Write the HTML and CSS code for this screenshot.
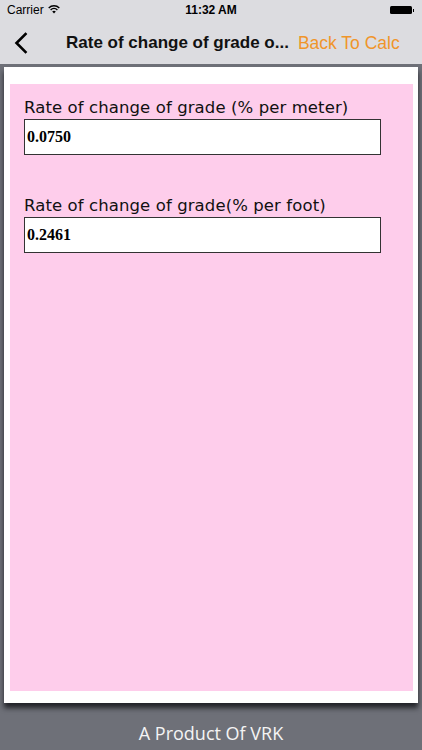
FILE: index.html
```html
<!DOCTYPE html>
<html>
<head>
<meta charset="utf-8">
<link rel="stylesheet" href="styles.css">
</head>
<body>
<div class="app">
  <header class="top">
    <div class="status">
      <div class="status-left">
        <span class="carrier">Carrier</span>
        <svg class="wifi" width="12" height="9" viewBox="0 0 12 9">
          <path d="M6 8.6 L4.2 6.6 A2.6 2.6 0 0 1 7.8 6.6 Z" fill="#000"/>
          <path d="M2.6 4.9 A4.9 4.9 0 0 1 9.4 4.9" stroke="#000" stroke-width="1.4" fill="none"/>
          <path d="M0.7 2.9 A7.6 7.6 0 0 1 11.3 2.9" stroke="#000" stroke-width="1.4" fill="none"/>
        </svg>
      </div>
      <span class="time">11:32 AM</span>
      <div class="battery"><span class="batt-body"></span><span class="batt-tip"></span></div>
    </div>
    <nav class="navbar">
      <svg class="back" width="14" height="22" viewBox="0 0 14 22">
        <path d="M11.5 2 L2.5 11 L11.5 20" stroke="#000" stroke-width="2.6" fill="none" stroke-linecap="square"/>
      </svg>
      <span class="title">Rate of change of grade o...</span>
      <span class="action">Back To Calc</span>
    </nav>
  </header>
  <main class="stage">
    <section class="card">
      <div class="pink">
        <div class="field">
          <label class="lbl">Rate of change of grade (% per meter)</label>
          <div class="box">0.0750</div>
        </div>
        <div class="field">
          <label class="lbl">Rate of change of grade(% per foot)</label>
          <div class="box">0.2461</div>
        </div>
      </div>
    </section>
  </main>
  <footer class="foot">A Product Of VRK</footer>
</div>
</body>
</html>
```
FILE: styles.css
```css
* { box-sizing: border-box; }
html, body { margin: 0; padding: 0; }
body {
  width: 422px;
  height: 750px;
  overflow: hidden;
  background: #6e7078;
  font-family: "Liberation Sans", Arial, sans-serif;
}
.app {
  display: flex;
  flex-direction: column;
  height: 750px;
}
.top {
  background: #dcdce0;
  height: 64px;
  flex: none;
}
.status {
  height: 20px;
  display: flex;
  align-items: center;
  justify-content: space-between;
  padding: 0 7px;
  font-size: 12px;
  color: #000;
  position: relative;
}
.status-left { display: flex; align-items: center; gap: 4px; }
.wifi { margin-top: -1px; }
.time {
  position: absolute;
  left: 0; right: 0;
  text-align: center;
  font-weight: bold;
  pointer-events: none;
}
.battery { display: flex; align-items: center; margin-right: 1px; }
.batt-body {
  width: 22px; height: 8px;
  background: #000;
  border-radius: 1.5px;
}
.batt-tip {
  width: 1.5px; height: 3px;
  background: #000;
  margin-left: 1px;
}
.navbar {
  height: 44px;
  display: flex;
  align-items: center;
  padding: 2px 0 0 14px;
}
.back { flex: none; margin-right: 38px; }
.title {
  font-size: 17px;
  font-weight: bold;
  color: #111;
  letter-spacing: 0;
  white-space: nowrap;
}
.action {
  margin-left: 9px;
  font-size: 17.5px;
  color: #f0952a;
  letter-spacing: 0;
  white-space: nowrap;
}
.stage {
  flex: 1;
  display: flex;
  padding: 3px 4px 0 4px;
}
.card {
  flex: 1;
  background: #ffffff;
  padding: 17px 5px 12px 6px;
  display: flex;
  box-shadow: 0 5px 5px rgba(10, 10, 15, 0.75);
}
.pink {
  flex: 1;
  background: #fecdeb;
  padding: 12px 0 0 14px;
  display: flex;
  flex-direction: column;
  gap: 39px;
}
.field { display: flex; flex-direction: column; }
.lbl {
  font-family: "DejaVu Sans", sans-serif;
  font-size: 16.5px;
  color: #111;
  letter-spacing: 0.1px;
  line-height: 23px;
  height: 23px;
}
.box {
  width: 357px;
  height: 36px;
  background: #fff;
  border: 1px solid #333;
  font-family: "Liberation Serif", "Times New Roman", serif;
  font-weight: bold;
  font-size: 16px;
  line-height: 34px;
  padding-left: 2px;
  color: #000;
}
.foot {
  height: 47px;
  flex: none;
  text-align: center;
  color: #f4f4f4;
  font-family: "Open Sans", sans-serif;
  font-size: 18px;
  padding-top: 17px;
  line-height: 26px;
}
```
